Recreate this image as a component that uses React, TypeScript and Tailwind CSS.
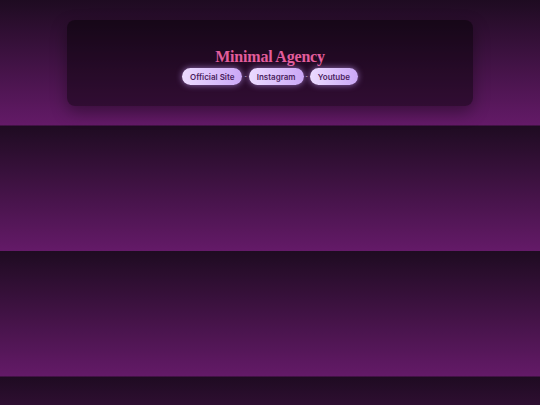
import React from 'react';

const links = ['Official Site', 'Instagram', 'Youtube'];

export default function App() {
  return (
    <div className="h-[405px] overflow-hidden bg-[linear-gradient(to_bottom,#1e0b21,#641a68)] bg-[length:100%_125.5px] bg-repeat-y px-[67px] pt-[20px]">
      {/* Header card */}
      <div className="flex flex-col items-center rounded-lg bg-black/45 pt-[27px] pb-[21px] shadow-[0_6px_16px_rgba(0,0,0,0.35)]">
        <h1 className="text-[16px] font-bold leading-[20px] text-[#e35d9c] [font-family:'Liberation_Serif',serif] tracking-[-0.2px]">
          Minimal Agency
        </h1>
        <div className="mt-[1px] flex items-center">
          {links.map((label, i) => (
            <React.Fragment key={label}>
              {i > 0 && <span className="px-[2px] text-[7px] text-[#c9b8d6]">-</span>}
              <a
                href="#"
                className="flex h-[17px] items-center rounded-full bg-[linear-gradient(to_right,#ecdbff,#cba7f6)] px-[8px] text-[8px] font-semibold text-[#4b1e5f] shadow-[0_0_6px_rgba(205,160,255,0.65)] [font-family:Inter,sans-serif]"
              >
                {label}
              </a>
            </React.Fragment>
          ))}
        </div>
      </div>
    </div>
  );
}
